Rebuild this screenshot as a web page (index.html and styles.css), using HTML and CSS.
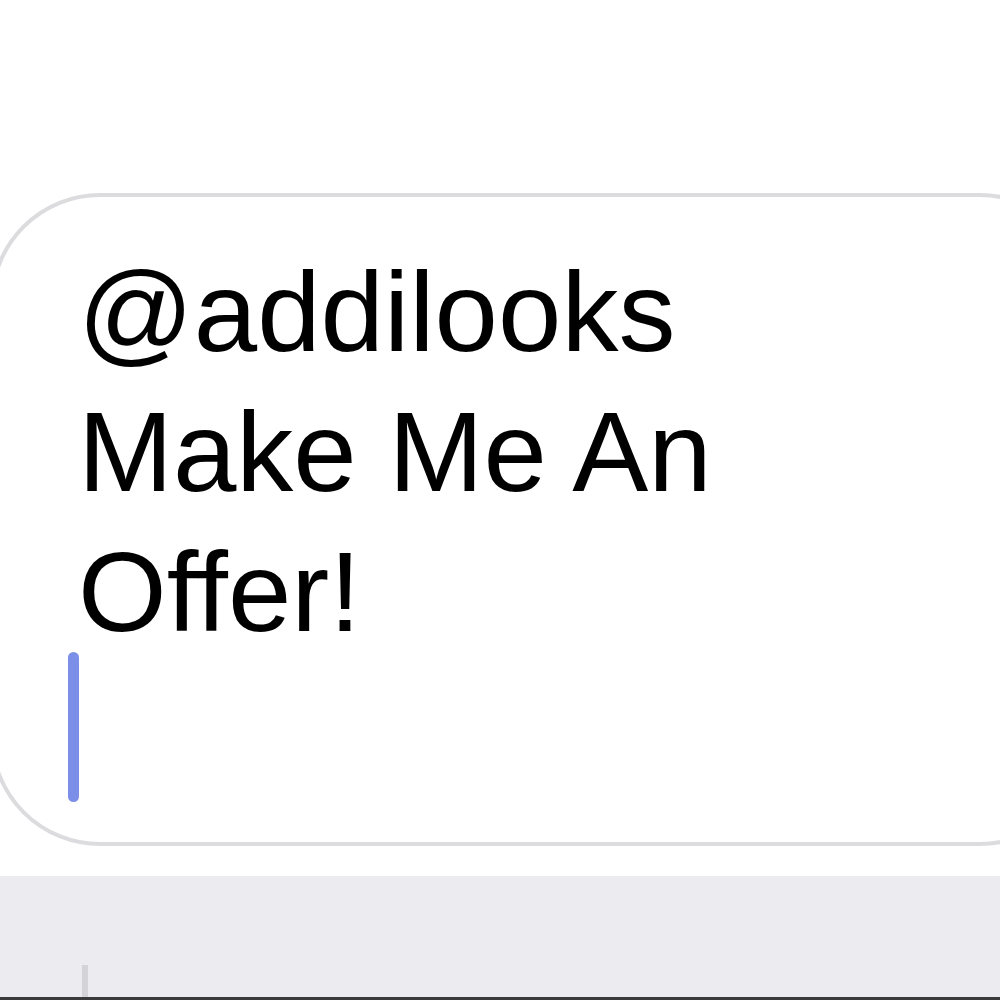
FILE: index.html
```html
<!DOCTYPE html>
<html>
<head>
<meta charset="utf-8">
<link rel="stylesheet" href="styles.css">
</head>
<body>
<main class="screen">
  <section class="composer">
    <div class="field">
      <div class="text">@addilooks<br>Make Me An<br>Offer!</div>
      <div class="caret"></div>
    </div>
  </section>
  <footer class="keyboard-bar">
    <div class="tick"></div>
  </footer>
</main>
</body>
</html>
```
FILE: styles.css
```css
html, body {
  margin: 0;
  padding: 0;
  background: #ffffff;
}
.screen {
  width: 1000px;
  height: 1000px;
  overflow: hidden;
  display: flex;
  flex-direction: column;
}
.composer {
  flex: 0 0 auto;
  padding-top: 193px;
  height: 876px;
  box-sizing: border-box;
}
.field {
  margin-left: -10px;
  width: 1100px;
  height: 653px;
  box-sizing: border-box;
  border: 4px solid #dcdcdf;
  border-radius: 110px;
  padding: 45px 0 0 84px;
  background: #fff;
}
.text {
  font-family: "Liberation Sans", Arial, sans-serif;
  font-size: 114px;
  line-height: 140px;
  color: #000;
}
.caret {
  width: 11px;
  height: 150px;
  border-radius: 6px;
  background: #7b8ee8;
  margin-left: -10px;
  margin-top: -10px;
}
.keyboard-bar {
  flex: 1;
  background: #ebebf0;
  border-bottom: 3px solid #3a3a3c;
  display: flex;
  align-items: flex-end;
  padding-left: 82px;
}
.tick {
  width: 6px;
  height: 32px;
  background: #d3d3d8;
}
```
